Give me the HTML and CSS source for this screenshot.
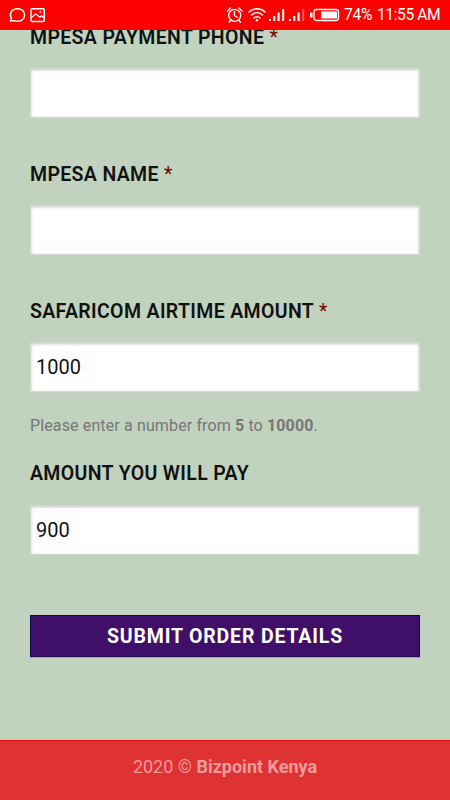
FILE: index.html
```html
<!DOCTYPE html>
<html lang="en">
<head>
<meta charset="utf-8">
<title>Bizpoint Kenya</title>
<link rel="stylesheet" href="styles.css">
</head>
<body>
<header class="status">
  <svg class="status-left" width="40" height="30" viewBox="0 0 40 30" fill="none" stroke="#fff" stroke-width="1.4" stroke-linecap="round" stroke-linejoin="round">
    <path d="M2.500 21 3.500 18.500C.8 14.500 3.200 8.700 9.600 8.700c4.300 0 7 3 7 6.300s-2.700 6.300-7 6.300c-1.500 0-2.500-.3-3.300-.7z"/>
    <rect x="23" y="8.700" width="13.300" height="12.800" rx="1"/>
    <path d="m23.500 17.500 4.200-3.600 4.200 3.300 1.700-1.500 2.500 2.300" stroke-width="1.200"/>
    <circle cx="32.200" cy="11.900" r=".6" stroke-width=".8"/>
  </svg>
  <div class="status-right">
    <svg width="116" height="30" viewBox="224 0 116 30" fill="none" stroke="#fff" stroke-linecap="round" stroke-linejoin="round">
      <g stroke-width="1.300">
        <circle cx="234.700" cy="15.300" r="6"/>
        <path d="M234.500 11.500v4.200l3 1.600M227.500 11l3-3M239 8l3 3M230.500 20.500l-1.500 1.700M239 20.500l1.500 1.700"/>
      </g>
      <g stroke-width="1.500">
        <path d="M249 12c4.500-4.300 11.500-4.300 16 0M251.500 15c3.300-3 7.700-3 11 0M254 18c1.800-1.600 4.200-1.600 6 0"/>
      </g>
      <circle cx="257" cy="20.300" r="1.200" fill="#fff" stroke="none"/>
      <g fill="#fff" stroke="none">
        <path d="M269 19h2v2h-2zM273.300 16h2v5h-2zM277.600 12.500h2V21h-2zM282.200 9h2v12h-2zM289 19h2v2h-2zM293.300 16h2v5h-2zM297.600 12.500h2V21h-2z"/>
        <path d="M302.200 9h2v12h-2z" opacity=".35"/>
        <path d="M310 12.500h2.500v5H310z"/>
        <rect x="321" y="11.500" width="16" height="7"/>
      </g>
      <rect x="314" y="9.500" width="24.500" height="11" rx="2.500" stroke-width="1.300"/>
    </svg>
    <span class="percent">74%</span>
    <span class="time">11:55 AM</span>
  </div>
</header>
<main>
  <form class="order">
    <label class="label phone" for="phone">MPESA PAYMENT PHONE <span class="req">*</span></label>
    <input class="input" id="phone" type="text">
    <label class="label name" for="name">MPESA NAME <span class="req">*</span></label>
    <input class="input" id="name" type="text">
    <label class="label amount" for="amount">SAFARICOM AIRTIME AMOUNT <span class="req">*</span></label>
    <input class="input" id="amount" type="text" value="1000">
    <p class="hint">Please enter a number from <strong>5</strong> to <strong>10000</strong>.</p>
    <label class="label pay" for="pay">AMOUNT YOU WILL PAY</label>
    <input class="input" id="pay" type="text" value="900">
    <button class="submit" type="button">SUBMIT ORDER DETAILS</button>
  </form>
</main>
<footer class="footer"><span>2020 © <strong>Bizpoint Kenya</strong></span></footer>
</body>
</html>
```

FILE: styles.css
```css
* {
  box-sizing: border-box;
}

body {
  margin: 0;
  height: 800px;
  display: flex;
  flex-direction: column;
  overflow: hidden;
  background: #c1d3bf;
  font-family: Roboto, sans-serif;
}

.status {
  height: 30px;
  flex: none;
  display: flex;
  justify-content: space-between;
  padding: 0 10px 0 8px;
  background: #f00;
  color: #fff;
  font-size: 15.6px;
  letter-spacing: -0.25px;
  line-height: 31px;
}

.status svg {
  display: block;
  flex: none;
}

.status-right {
  display: flex;
  width: 216px;
  white-space: nowrap;
}

.percent {
  width: 33px;
  margin-left: 4px;
  flex: none;
}

.time {
  letter-spacing: -0.4px;
}

main {
  height: 710px;
  flex: none;
  overflow: hidden;
  padding: 0 30px;
}

.order {
  display: flex;
  flex-direction: column;
  margin-top: -5px;
}

.label {
  height: 26px;
  margin: 0 0 17px;
  color: #111;
  font-size: 19.5px;
  font-weight: 600;
  letter-spacing: 0.35px;
  line-height: 26px;
  white-space: nowrap;
}

.name,
.amount {
  margin-top: 44px;
}

.pay {
  margin-top: 24px;
  margin-bottom: 18px;
}

.req {
  color: #790000;
  font-weight: 400;
}

.input {
  width: 100%;
  height: 50px;
  padding: 0 5px;
  border: 1px solid #d3dbd2;
  border-radius: 0;
  background: #fff;
  box-shadow: inset 0 1px 3px #c4c4c4;
  color: #111;
  font-family: inherit;
  font-size: 20px;
}

.hint {
  margin: 21px 0 0;
  color: #767676;
  font-size: 16px;
  letter-spacing: 0.13px;
  line-height: 25px;
  height: 24px;
  white-space: nowrap;
}

.submit {
  height: 42px;
  margin-top: 60px;
  padding: 0;
  border: 1px solid #10034f;
  border-bottom-color: #2d0d59;
  border-radius: 0;
  background: #3f0f69;
  box-shadow: 0 1px 0 #a99fb2;
  color: #fff;
  font-family: inherit;
  font-size: 19.5px;
  font-weight: 700;
  letter-spacing: 0.83px;
}

.footer {
  height: 60px;
  flex: none;
  border-top: 1px solid #e60c0c;
  background: #df3333;
  color: #f19b9b;
  font-size: 18px;
  line-height: 51px;
  text-align: center;
}
```
